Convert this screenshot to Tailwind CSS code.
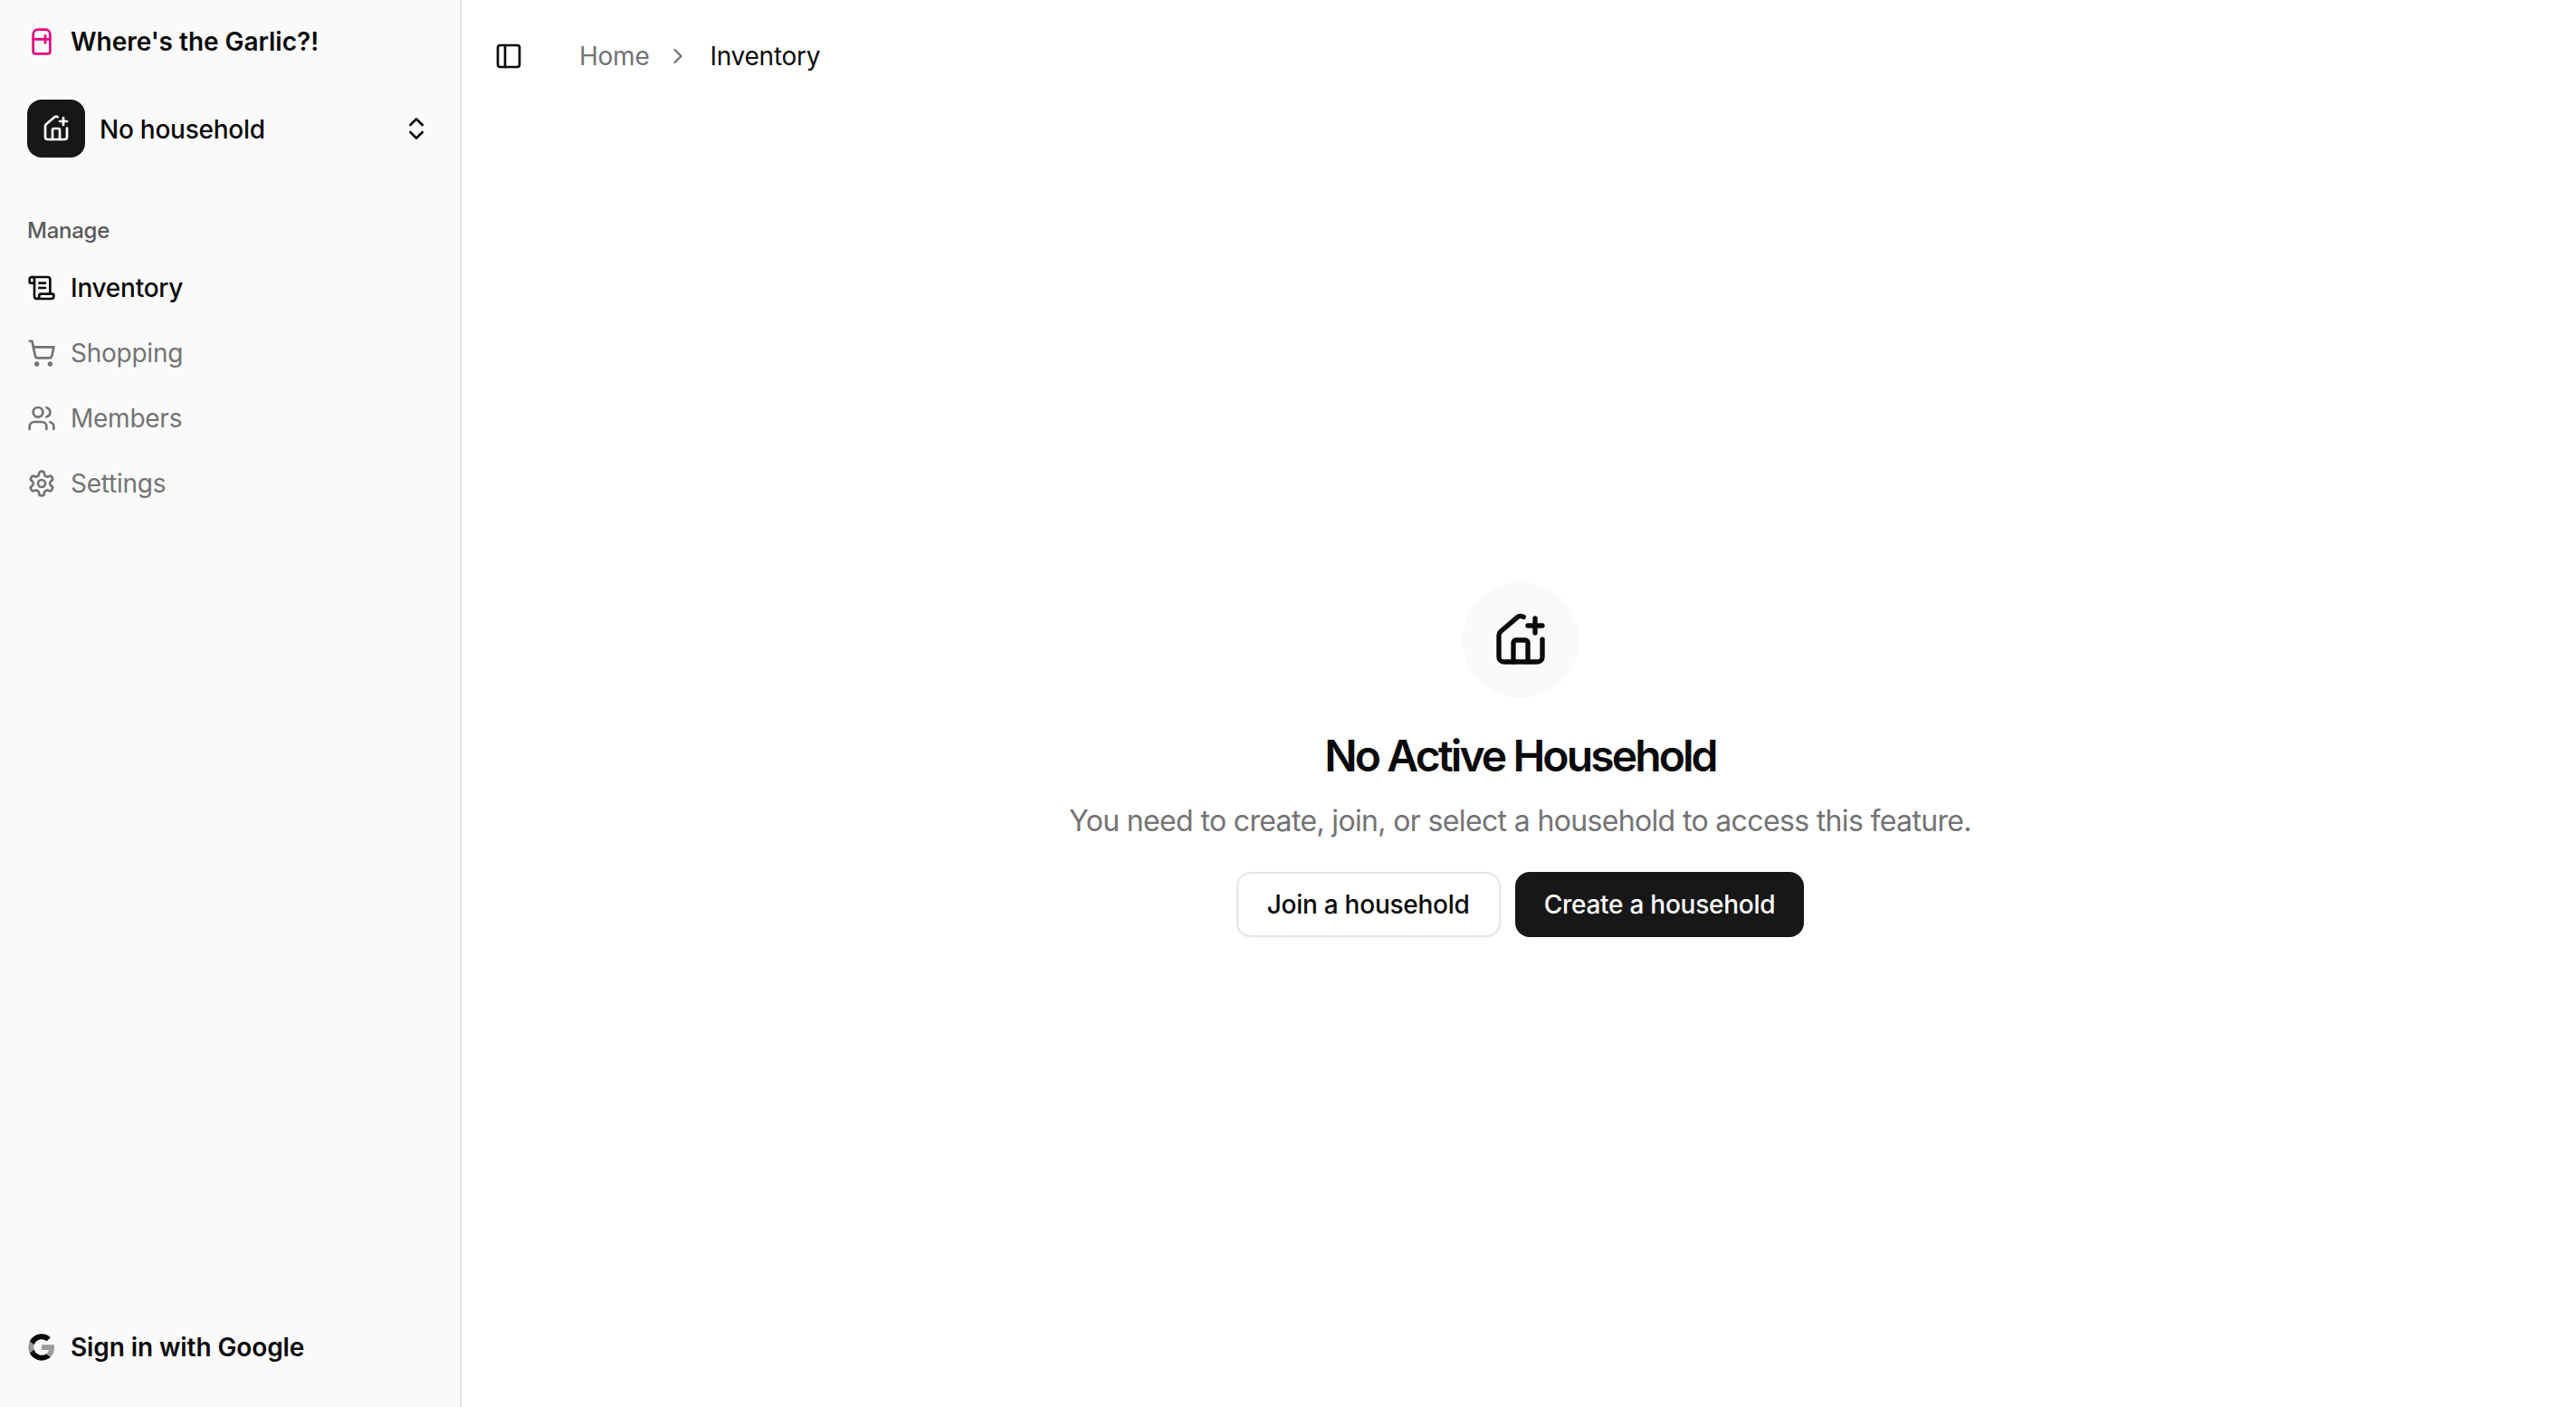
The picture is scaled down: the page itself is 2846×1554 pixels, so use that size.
<!doctype html>
<html lang="en">
<head>
<meta charset="utf-8">
<title>Where's the Garlic?!</title>
<script src="https://cdn.jsdelivr.net/npm/@tailwindcss/browser@4"></script>
</head>
<body class="bg-white font-['Inter',sans-serif] text-[#0a0a0a] tracking-[-0.25px]">
<div class="flex h-[1554px] w-[2846px] overflow-hidden">
  <aside class="flex w-[510px] shrink-0 flex-col border-r-2 border-[#e5e5e5] bg-[#fafafa] pl-[30px] pr-[32px]">
    <div class="flex h-[32px] mt-[30px] items-center gap-[16px]">
      <svg class="size-[32px] text-[#e6007e]" viewBox="0 0 24 24" fill="none" stroke="currentColor" stroke-width="2" stroke-linecap="round" stroke-linejoin="round"><path d="M5 6a4 4 0 0 1 4-4h6a4 4 0 0 1 4 4v14a2 2 0 0 1-2 2H7a2 2 0 0 1-2-2V6Z"/><path d="M5 10h14"/><path d="M15 7v6"/></svg>
      <span class="text-[28px] font-semibold tracking-[-0.03px]">Where's the Garlic?!</span>
    </div>
    <div class="mt-[48px] flex h-[64px] items-center gap-[16px]">
      <div class="flex size-[64px] items-center justify-center rounded-[16px] bg-[#171717] text-white">
        <svg class="size-[32px]" viewBox="0 0 24 24" fill="none" stroke="currentColor" stroke-width="2" stroke-linecap="round" stroke-linejoin="round"><path d="M13.22 2.416a2 2 0 0 0-2.511.057l-7 5.999A2 2 0 0 0 3 10v9a2 2 0 0 0 2 2h14a2 2 0 0 0 2-2v-7.354"/><path d="M15 21v-8a1 1 0 0 0-1-1h-4a1 1 0 0 0-1 1v8"/><path d="M15 6h6"/><path d="M18 3v6"/></svg>
      </div>
      <span class="flex-1 pt-[2px] text-[28px] font-medium">No household</span>
      <svg class="size-[32px]" viewBox="0 0 24 24" fill="none" stroke="currentColor" stroke-width="2" stroke-linecap="round" stroke-linejoin="round"><path d="m7 15 5 5 5-5"/><path d="m7 9 5-5 5 5"/></svg>
    </div>
    <div class="mt-[65px] text-[24px] leading-[32px] font-medium text-[#595959]">Manage</div>
    <nav class="mt-[15px] flex flex-col gap-[8px] text-[28px]">
      <a class="flex h-[64px] items-center gap-[16px] font-medium">
        <svg class="size-[32px]" viewBox="0 0 24 24" fill="none" stroke="currentColor" stroke-width="2" stroke-linecap="round" stroke-linejoin="round"><path d="M15 12h-5"/><path d="M15 8h-5"/><path d="M19 17V5a2 2 0 0 0-2-2H4"/><path d="M8 21h12a2 2 0 0 0 2-2v-1a1 1 0 0 0-1-1H11a1 1 0 0 0-1 1v1a2 2 0 1 1-4 0V5a2 2 0 1 0-4 0v2a1 1 0 0 0 1 1h3"/></svg>
        Inventory
      </a>
      <a class="flex h-[64px] items-center gap-[16px] text-[#737373]">
        <svg class="size-[32px]" viewBox="0 0 24 24" fill="none" stroke="currentColor" stroke-width="2" stroke-linecap="round" stroke-linejoin="round"><circle cx="8" cy="21" r="1"/><circle cx="19" cy="21" r="1"/><path d="M2.05 2.05h2l2.66 12.42a2 2 0 0 0 2 1.58h9.78a2 2 0 0 0 1.95-1.57l1.65-7.43H5.12"/></svg>
        Shopping
      </a>
      <a class="flex h-[64px] items-center gap-[16px] text-[#737373]">
        <svg class="size-[32px]" viewBox="0 0 24 24" fill="none" stroke="currentColor" stroke-width="2" stroke-linecap="round" stroke-linejoin="round"><path d="M16 21v-2a4 4 0 0 0-4-4H6a4 4 0 0 0-4 4v2"/><circle cx="9" cy="7" r="4"/><path d="M22 21v-2a4 4 0 0 0-3-3.87"/><path d="M16 3.13a4 4 0 0 1 0 7.75"/></svg>
        Members
      </a>
      <a class="flex h-[64px] items-center gap-[16px] text-[#737373]">
        <svg class="size-[32px]" viewBox="0 0 24 24" fill="none" stroke="currentColor" stroke-width="2" stroke-linecap="round" stroke-linejoin="round"><path d="M12.22 2h-.44a2 2 0 0 0-2 2v.18a2 2 0 0 1-1 1.73l-.43.25a2 2 0 0 1-2 0l-.15-.08a2 2 0 0 0-2.73.73l-.22.38a2 2 0 0 0 .73 2.73l.15.1a2 2 0 0 1 1 1.72v.51a2 2 0 0 1-1 1.74l-.15.09a2 2 0 0 0-.73 2.73l.22.38a2 2 0 0 0 2.73.73l.15-.08a2 2 0 0 1 2 0l.43.25a2 2 0 0 1 1 1.73V20a2 2 0 0 0 2 2h.44a2 2 0 0 0 2-2v-.18a2 2 0 0 1 1-1.73l.43-.25a2 2 0 0 1 2 0l.15.08a2 2 0 0 0 2.73-.73l.22-.39a2 2 0 0 0-.73-2.73l-.15-.08a2 2 0 0 1-1-1.74v-.5a2 2 0 0 1 1-1.74l.15-.09a2 2 0 0 0 .73-2.73l-.22-.38a2 2 0 0 0-2.73-.73l-.15.08a2 2 0 0 1-2 0l-.43-.25a2 2 0 0 1-1-1.73V4a2 2 0 0 0-2-2z"/><circle cx="12" cy="12" r="3"/></svg>
        Settings
      </a>
    </nav>
    <div class="mt-auto mb-[50px] flex h-[32px] items-center gap-[16px]">
      <svg class="size-[32px]" viewBox="0 0 24 24"><path fill="#9a9a9a" d="M22.56 12.25c0-.78-.07-1.53-.2-2.25H12v4.26h5.92c-.26 1.37-1.04 2.53-2.21 3.31v2.77h3.57c2.08-1.92 3.28-4.74 3.28-8.09z"/><path fill="#0a0a0a" d="M12 23c2.97 0 5.46-.98 7.28-2.66l-3.57-2.77c-.98.66-2.23 1.06-3.71 1.06-2.86 0-5.29-1.93-6.16-4.53H2.18v2.84C3.99 20.53 7.7 23 12 23z"/><path fill="#9a9a9a" d="M5.84 14.09c-.22-.66-.35-1.36-.35-2.09s.13-1.43.35-2.09V7.07H2.18C1.43 8.55 1 10.22 1 12s.43 3.45 1.18 4.93l2.85-2.22.81-.62z"/><path fill="#0a0a0a" d="M12 5.38c1.62 0 3.06.56 4.21 1.64l3.15-3.15C17.45 2.09 14.97 1 12 1 7.7 1 3.99 3.47 2.18 7.07l3.66 2.84c.87-2.6 3.3-4.53 6.16-4.53z"/></svg>
      <span class="text-[28px] font-semibold tracking-[-0.1px]">Sign in with Google</span>
    </div>
  </aside>
  <main class="flex min-w-0 flex-1 flex-col">
    <header class="flex h-[124px] shrink-0 items-center pl-[36px]">
      <svg class="size-[32px]" viewBox="0 0 24 24" fill="none" stroke="currentColor" stroke-width="2" stroke-linecap="round" stroke-linejoin="round"><rect width="18" height="18" x="3" y="3" rx="2"/><path d="M9 3v18"/></svg>
      <span class="ml-[62px] text-[28px] text-[#737373]">Home</span>
      <svg class="ml-[18px] size-[28px] text-[#737373]" viewBox="0 0 24 24" fill="none" stroke="currentColor" stroke-width="2" stroke-linecap="round" stroke-linejoin="round"><path d="m9 18 6-6-6-6"/></svg>
      <span class="ml-[21px] text-[28px]">Inventory</span>
    </header>
    <section class="flex flex-1 flex-col items-center justify-center pl-[3px]">
      <div class="flex size-[128px] items-center justify-center rounded-full bg-[#fafafa]">
        <svg class="size-[64px]" viewBox="0 0 24 24" fill="none" stroke="currentColor" stroke-width="2" stroke-linecap="round" stroke-linejoin="round"><path d="M13.22 2.416a2 2 0 0 0-2.511.057l-7 5.999A2 2 0 0 0 3 10v9a2 2 0 0 0 2 2h14a2 2 0 0 0 2-2v-7.354"/><path d="M15 21v-8a1 1 0 0 0-1-1h-4a1 1 0 0 0-1 1v8"/><path d="M15 6h6"/><path d="M18 3v6"/></svg>
      </div>
      <h1 class="mt-[32px] text-[48px] leading-[64px] font-semibold tracking-[-2.9px]">No Active Household</h1>
      <p class="mt-[16px] text-[32px] leading-[48px] tracking-[-0.65px] text-[#737373]">You need to create, join, or select a household to access this feature.</p>
      <div class="mt-[32px] flex gap-[16px] text-[28px] font-medium">
        <button class="flex h-[72px] items-center rounded-[16px] border-2 border-[#e5e5e5] bg-white px-[32px] shadow-xs">Join a household</button>
        <button class="flex h-[72px] items-center rounded-[16px] bg-[#171717] px-[32px] text-white">Create a household</button>
      </div>
    </section>
  </main>
</div>
</body>
</html>
